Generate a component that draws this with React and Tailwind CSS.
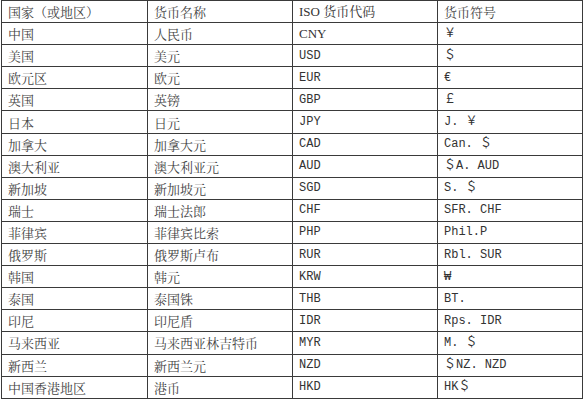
const ROWS = [
  ['中国', '人民币', 'CNY', '￥'],
  ['美国', '美元', 'USD', '＄'],
  ['欧元区', '欧元', 'EUR', '€'],
  ['英国', '英镑', 'GBP', '￡'],
  ['日本', '日元', 'JPY', 'J. ￥'],
  ['加拿大', '加拿大元', 'CAD', 'Can. ＄'],
  ['澳大利亚', '澳大利亚元', 'AUD', '＄A. AUD'],
  ['新加坡', '新加坡元', 'SGD', 'S. ＄'],
  ['瑞士', '瑞士法郎', 'CHF', 'SFR. CHF'],
  ['菲律宾', '菲律宾比索', 'PHP', 'Phil.P'],
  ['俄罗斯', '俄罗斯卢布', 'RUR', 'Rbl. SUR'],
  ['韩国', '韩元', 'KRW', '₩'],
  ['泰国', '泰国铢', 'THB', 'BT.'],
  ['印尼', '印尼盾', 'IDR', 'Rps. IDR'],
  ['马来西亚', '马来西亚林吉特币', 'MYR', 'M. ＄'],
  ['新西兰', '新西兰元', 'NZD', '＄NZ. NZD'],
  ['中国香港地区', '港币', 'HKD', 'HK＄'],
]

const cjk = "font-['Noto_Serif_CJK_SC','Noto_Sans_CJK_SC',serif] text-[13px] text-[#444]"
const mono = "font-['Liberation_Mono','Noto_Sans_CJK_SC',monospace] text-[12px] text-[#333]"
const serifLatin = "font-['Liberation_Serif','Noto_Serif_CJK_SC','Noto_Sans_CJK_SC',serif] text-[13px] text-[#333]"

function Cell({ children, className }) {
  return (
    <div className={`flex items-center pl-[6px] border-r border-b border-[#3a3a3a] whitespace-pre overflow-hidden ${className}`}>
      {children}
    </div>
  )
}

export default function App() {
  return (
    <div className="w-[586px] h-[400px] bg-white overflow-hidden">
      <div className="ml-[1px] w-[582px] grid grid-cols-[146px_145px_145px_145px] grid-rows-[repeat(18,22.1px)] border-t border-l border-[#3a3a3a] leading-none">
        {/* header */}
        <Cell className={cjk}>国家（或地区）</Cell>
        <Cell className={cjk}>货币名称</Cell>
        <Cell className={serifLatin}>ISO 货币代码</Cell>
        <Cell className={cjk}>货币符号</Cell>

        {ROWS.map(([country, name, code, sym], i) => (
          <div key={code} className="contents">
            <Cell className={cjk}>{country}</Cell>
            <Cell className={cjk}>{name}</Cell>
            <Cell className={i === 0 ? serifLatin : mono}>{code}</Cell>
            <Cell className={mono}>{sym}</Cell>
          </div>
        ))}
      </div>
    </div>
  )
}
